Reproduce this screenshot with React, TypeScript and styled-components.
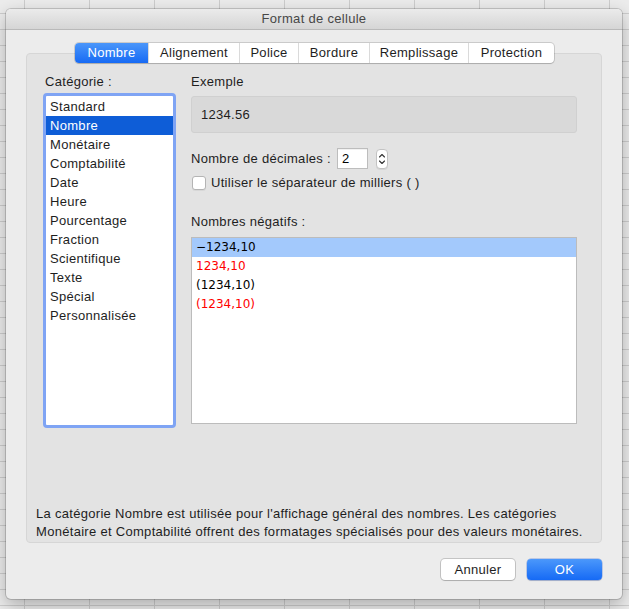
import React from 'react';
import styled, { createGlobalStyle } from 'styled-components';

const GlobalStyle = createGlobalStyle`
  html, body { margin: 0; padding: 0; }
  body {
    width: 629px;
    height: 609px;
    overflow: hidden;
    background-color: #ececec;
    background-image:
      linear-gradient(to bottom, #cdcdcd 1px, transparent 1px),
      linear-gradient(to right, #cdcdcd 1px, transparent 1px);
    background-size: 100% 16px, 65px 100%;
    background-position: 0 13px, 24px 0;
    font-family: "Liberation Sans", Arial, sans-serif;
    letter-spacing: 0.3px;
    -webkit-font-smoothing: antialiased;
  }
`;

const Stage = styled.div`
  padding: 9px 0 0 6px;
`;

const Window = styled.div`
  width: 616px;
  height: 590px;
  box-sizing: border-box;
  background: #ececec;
  border-radius: 5px;
  box-shadow: 0 0 0 1px rgba(0, 0, 0, 0.16), 0 6px 18px rgba(0, 0, 0, 0.28);
  display: flex;
  flex-direction: column;
  overflow: hidden;
`;

const TitleBar = styled.div`
  height: 21px;
  box-sizing: border-box;
  border-bottom: 1px solid #b9b9b9;
  background: linear-gradient(#ebebeb, #d5d5d5);
  color: #474747;
  font-size: 13px;
  line-height: 20px;
  text-align: center;
`;

const Body = styled.div`
  flex: 1;
  display: flex;
  flex-direction: column;
  padding: 13px 20px 19px;
`;

const TabBar = styled.div`
  align-self: center;
  display: flex;
  height: 20px;
  margin-left: 1px;
  margin-bottom: -10px;
  position: relative;
  z-index: 1;
  background: #ffffff;
  border-radius: 4px;
  box-shadow: 0 0 0 1px rgba(0, 0, 0, 0.14), 0 1px 1px rgba(0, 0, 0, 0.12);
`;

const Tab = styled.div<{ $active?: boolean; $w: number }>`
  width: ${p => p.$w}px;
  box-sizing: border-box;
  text-align: center;
  font-size: 13px;
  line-height: 20px;
  color: ${p => (p.$active ? '#ffffff' : '#1e1e1e')};
  background: ${p => (p.$active ? 'linear-gradient(#4a96fa, #176af4)' : 'transparent')};
  border-left: 1px solid ${p => (p.$active ? 'transparent' : '#dadada')};
  &:first-child {
    border-left: none;
    border-radius: 4px 0 0 4px;
  }
  &:last-child {
    border-radius: 0 4px 4px 0;
  }
`;

const GroupBox = styled.div`
  height: 490px;
  box-sizing: border-box;
  background: #e3e3e3;
  border: 1px solid #d6d6d6;
  border-radius: 4px;
  padding: 20px 24px 1px 9px;
  display: flex;
  flex-direction: column;
`;

const Columns = styled.div`
  display: flex;
  gap: 15px;
  padding-left: 7px;
`;

const LeftCol = styled.div`
  width: 133px;
  display: flex;
  flex-direction: column;
`;

const RightCol = styled.div`
  flex: 1;
  display: flex;
  flex-direction: column;
`;

const Label = styled.div<{ $indent?: number }>`
  font-size: 13px;
  line-height: 16px;
  color: #1e1e1e;
  padding-left: ${p => p.$indent ?? 0}px;
  white-space: nowrap;
`;

const CategoryList = styled.div`
  margin-top: 3px;
  height: 335px;
  box-sizing: border-box;
  border: 3px solid #7fa4f4;
  border-radius: 4px;
  background: #ffffff;
  padding-top: 1px;
  overflow: hidden;
`;

const CategoryItem = styled.div<{ $selected?: boolean }>`
  height: 19px;
  line-height: 19px;
  padding-left: 4px;
  font-size: 13px;
  color: ${p => (p.$selected ? '#ffffff' : '#1e1e1e')};
  background: ${p => (p.$selected ? '#0e5dd7' : 'transparent')};
`;

const SampleBox = styled.div`
  margin-top: 6px;
  height: 37px;
  box-sizing: border-box;
  background: #d9d9d9;
  border: 1px solid #d0d0d0;
  border-radius: 3px;
  padding-left: 9px;
  font-size: 13px;
  line-height: 35px;
  color: #1e1e1e;
`;

const DecimalsRow = styled.div`
  margin-top: 15px;
  height: 21px;
  display: flex;
  align-items: center;
`;

const NumberInput = styled.div`
  margin-left: 6px;
  width: 31px;
  height: 21px;
  box-sizing: border-box;
  background: #ffffff;
  border: 1px solid #bdbdbd;
  box-shadow: inset 0 1px 0 rgba(0, 0, 0, 0.05);
  padding-left: 4px;
  font-size: 13px;
  line-height: 19px;
  color: #000000;
`;

const Stepper = styled.div`
  margin-left: 8px;
  width: 12px;
  height: 20px;
  box-sizing: border-box;
  background: #ffffff;
  border: 1px solid #c3c3c3;
  border-radius: 4px;
  box-shadow: 0 1px 0 rgba(0, 0, 0, 0.06);
  display: flex;
  align-items: center;
  justify-content: center;
`;

const CheckRow = styled.div`
  margin-top: 6px;
  height: 16px;
  display: flex;
  align-items: center;
`;

const CheckBox = styled.div`
  width: 14px;
  height: 14px;
  box-sizing: border-box;
  margin-left: 1px;
  background: #ffffff;
  border: 1px solid #b4b4b4;
  border-radius: 3px;
  box-shadow: 0 1px 0 rgba(0, 0, 0, 0.05);
`;

const CheckLabel = styled(Label)`
  margin-left: 5px;
`;

const SectionLabel = styled(Label)<{ $top: number }>`
  margin-top: ${p => p.$top}px;
`;

const NegativeList = styled.div`
  margin-top: 7px;
  height: 187px;
  box-sizing: border-box;
  background: #ffffff;
  border: 1px solid #bcbcbc;
  overflow: hidden;
`;

const NegativeItem = styled.div<{ $red?: boolean; $selected?: boolean }>`
  height: 19px;
  line-height: 19px;
  padding-left: 4px;
  font-family: "DejaVu Sans", Verdana, sans-serif;
  font-size: 12px;
  letter-spacing: 0;
  color: ${p => (p.$red ? '#ff0000' : '#000000')};
  background: ${p => (p.$selected ? '#a3c9fc' : 'transparent')};
`;

const Description = styled.div`
  margin-top: auto;
  font-size: 13px;
  line-height: 18px;
  color: #1e1e1e;
  white-space: nowrap;
`;

const ButtonRow = styled.div`
  margin-top: 16px;
  display: flex;
  justify-content: flex-end;
  gap: 12px;
`;

const Button = styled.div<{ $primary?: boolean; $w: number }>`
  width: ${p => p.$w}px;
  height: 21px;
  box-sizing: border-box;
  border-radius: 4px;
  text-align: center;
  font-size: 13px;
  line-height: 21px;
  color: ${p => (p.$primary ? '#ffffff' : '#1e1e1e')};
  background: ${p => (p.$primary ? 'linear-gradient(#4b98fb, #166af5)' : '#ffffff')};
  box-shadow: ${p =>
    p.$primary
      ? '0 0 0 0.5px rgba(0, 60, 200, 0.4), 0 1px 1px rgba(0, 0, 0, 0.15)'
      : '0 0 0 1px rgba(0, 0, 0, 0.17), 0 1px 1px rgba(0, 0, 0, 0.12)'};
`;

const tabs = [
  { label: 'Nombre', w: 73 },
  { label: 'Alignement', w: 91 },
  { label: 'Police', w: 59 },
  { label: 'Bordure', w: 71 },
  { label: 'Remplissage', w: 99 },
  { label: 'Protection', w: 86 },
];

const categories = [
  'Standard',
  'Nombre',
  'Monétaire',
  'Comptabilité',
  'Date',
  'Heure',
  'Pourcentage',
  'Fraction',
  'Scientifique',
  'Texte',
  'Spécial',
  'Personnalisée',
];

const negatives = [
  { text: '−1234,10', red: false },
  { text: '1234,10', red: true },
  { text: '(1234,10)', red: false },
  { text: '(1234,10)', red: true },
];

const StepperIcon = () => (
  <svg width="8" height="14" viewBox="0 0 8 14" fill="none">
    <path d="M1.5 5 L4 2.5 L6.5 5" stroke="#333" strokeWidth="1.1" strokeLinecap="round" strokeLinejoin="round" />
    <path d="M1.5 9 L4 11.5 L6.5 9" stroke="#333" strokeWidth="1.1" strokeLinecap="round" strokeLinejoin="round" />
  </svg>
);

export default function App() {
  return (
    <>
      <GlobalStyle />
      <Stage>
        <Window>
          <TitleBar>Format de cellule</TitleBar>
          <Body>
            <TabBar>
              {tabs.map((t, i) => (
                <Tab key={t.label} $w={t.w} $active={i === 0}>
                  {t.label}
                </Tab>
              ))}
            </TabBar>
            <GroupBox>
              <Columns>
                <LeftCol>
                  <Label $indent={2}>Catégorie :</Label>
                  <CategoryList>
                    {categories.map(c => (
                      <CategoryItem key={c} $selected={c === 'Nombre'}>
                        {c}
                      </CategoryItem>
                    ))}
                  </CategoryList>
                </LeftCol>
                <RightCol>
                  <Label>Exemple</Label>
                  <SampleBox>1234.56</SampleBox>
                  <DecimalsRow>
                    <Label>Nombre de décimales :</Label>
                    <NumberInput>2</NumberInput>
                    <Stepper>
                      <StepperIcon />
                    </Stepper>
                  </DecimalsRow>
                  <CheckRow>
                    <CheckBox />
                    <CheckLabel>Utiliser le séparateur de milliers ( )</CheckLabel>
                  </CheckRow>
                  <SectionLabel $top={23}>Nombres négatifs :</SectionLabel>
                  <NegativeList>
                    {negatives.map((n, i) => (
                      <NegativeItem key={i} $red={n.red} $selected={i === 0}>
                        {n.text}
                      </NegativeItem>
                    ))}
                  </NegativeList>
                </RightCol>
              </Columns>
              <Description>
                La catégorie Nombre est utilisée pour l'affichage général des nombres. Les catégories
                <br />
                Monétaire et Comptabilité offrent des formatages spécialisés pour des valeurs monétaires.
              </Description>
            </GroupBox>
            <ButtonRow>
              <Button $w={74}>Annuler</Button>
              <Button $w={75} $primary>
                OK
              </Button>
            </ButtonRow>
          </Body>
        </Window>
      </Stage>
    </>
  );
}
